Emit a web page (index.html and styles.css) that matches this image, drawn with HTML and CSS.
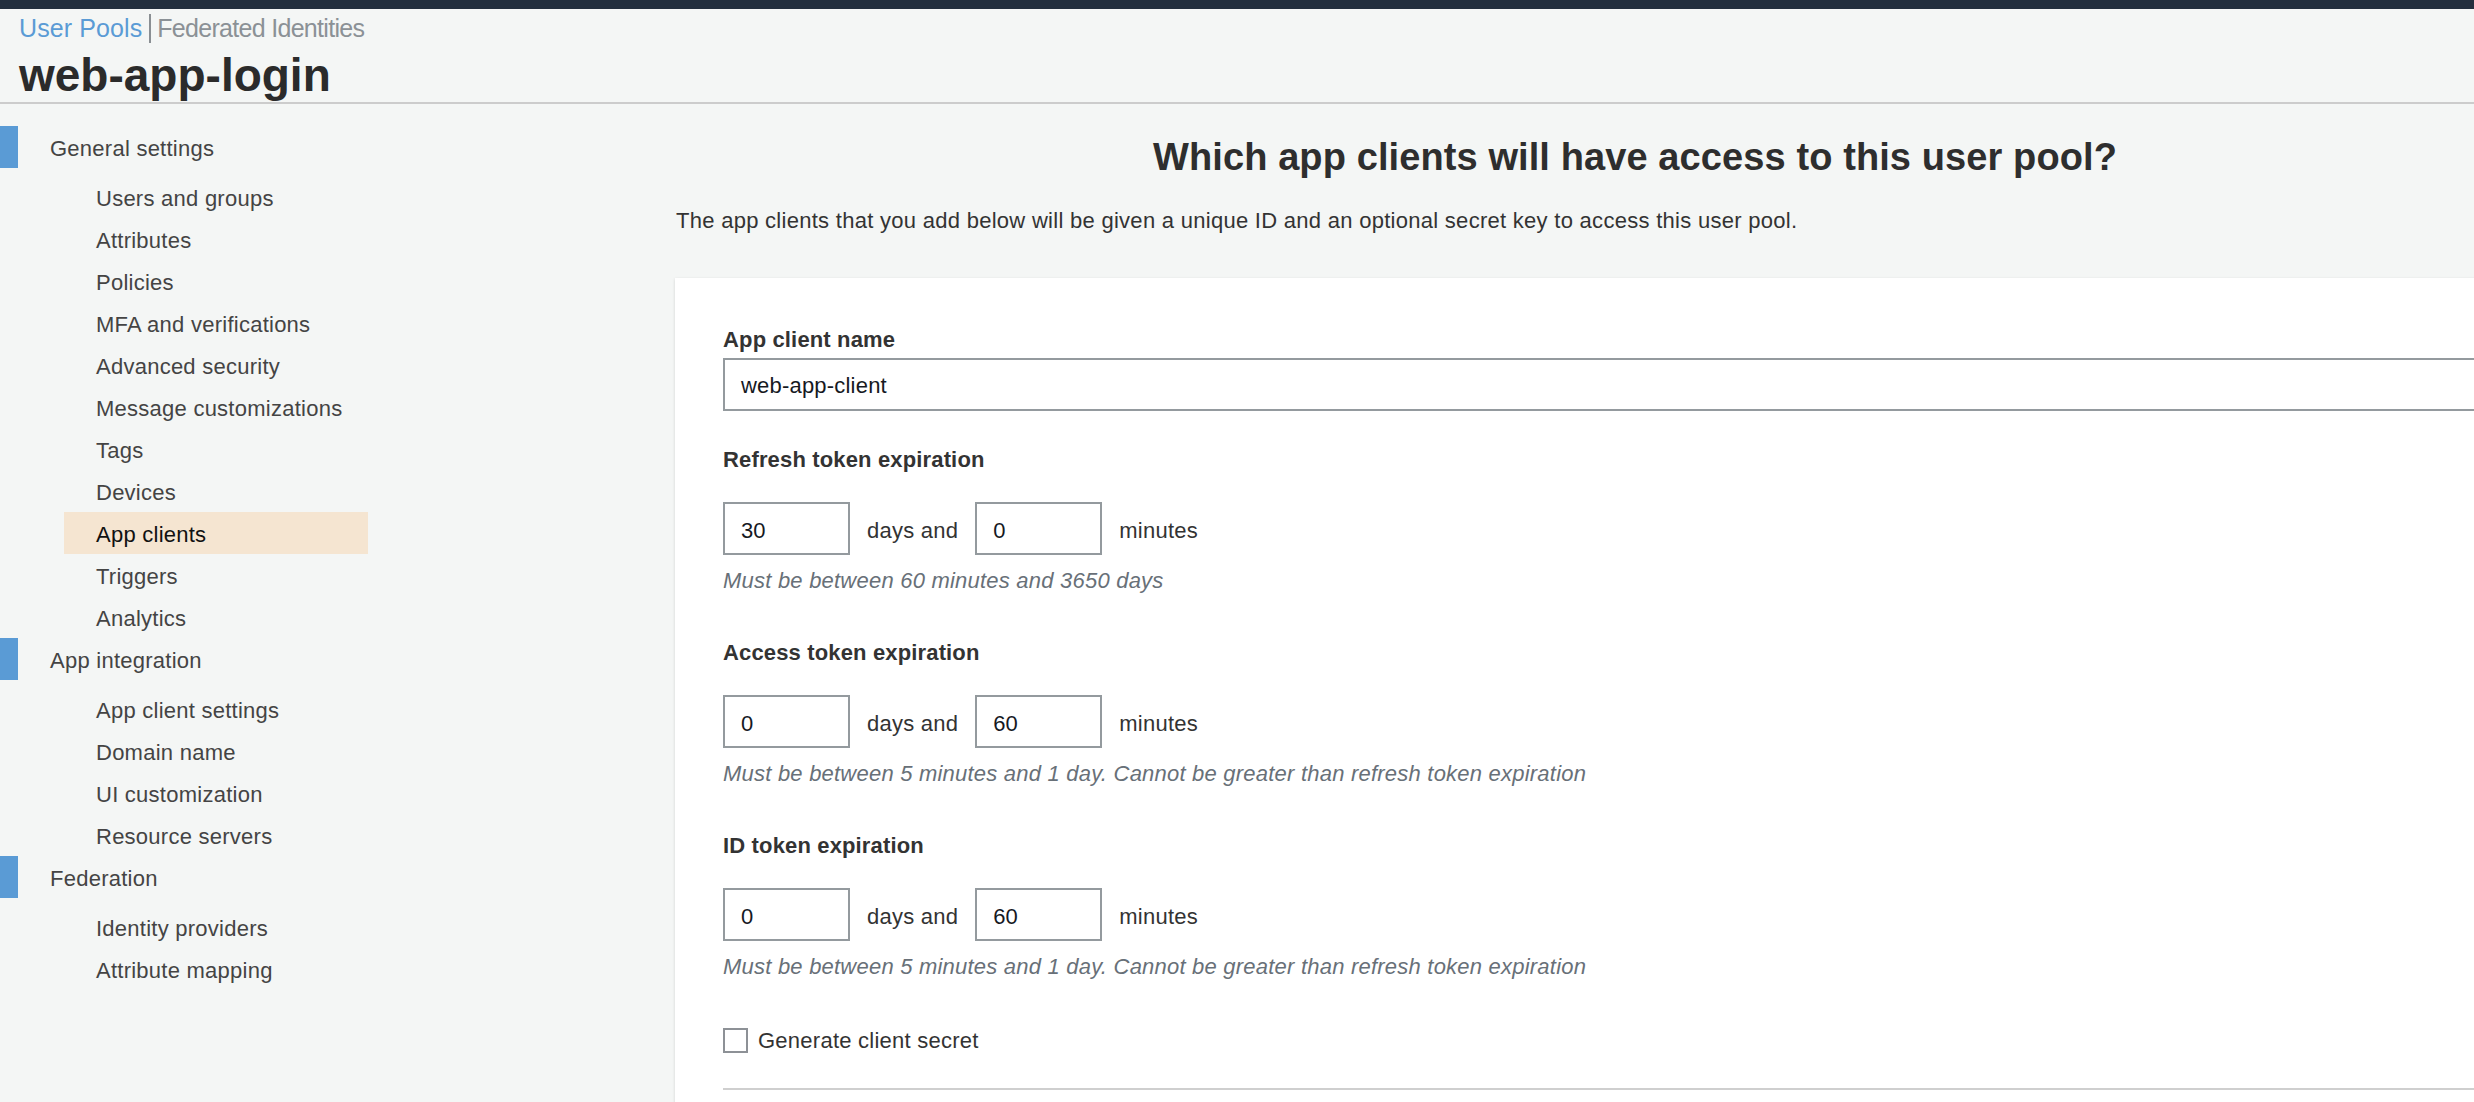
FILE: index.html
```html
<!DOCTYPE html>
<html lang="en">
<head>
<meta charset="utf-8">
<title>web-app-login - App clients</title>
<link rel="stylesheet" href="styles.css">
</head>
<body>
<div class="topbar"></div>
<header class="header">
  <nav class="crumbs">
    <a class="crumb-active">User Pools</a>
    <span class="crumb-sep"></span>
    <a class="crumb">Federated Identities</a>
  </nav>
  <h1 class="pool-title">web-app-login</h1>
</header>
<div class="layout">
  <aside class="sidebar">
    <div class="cat"><span class="cat-mark"></span><span class="cat-text">General settings</span></div>
    <ul class="subs">
      <li class="sub">Users and groups</li>
      <li class="sub">Attributes</li>
      <li class="sub">Policies</li>
      <li class="sub">MFA and verifications</li>
      <li class="sub">Advanced security</li>
      <li class="sub">Message customizations</li>
      <li class="sub">Tags</li>
      <li class="sub">Devices</li>
      <li class="sub sub-active">App clients</li>
      <li class="sub">Triggers</li>
      <li class="sub">Analytics</li>
    </ul>
    <div class="cat"><span class="cat-mark"></span><span class="cat-text">App integration</span></div>
    <ul class="subs">
      <li class="sub">App client settings</li>
      <li class="sub">Domain name</li>
      <li class="sub">UI customization</li>
      <li class="sub">Resource servers</li>
    </ul>
    <div class="cat"><span class="cat-mark"></span><span class="cat-text">Federation</span></div>
    <ul class="subs">
      <li class="sub">Identity providers</li>
      <li class="sub">Attribute mapping</li>
    </ul>
  </aside>
  <main class="main">
    <h2 class="page-heading">Which app clients will have access to this user pool?</h2>
    <p class="page-intro">The app clients that you add below will be given a unique ID and an optional secret key to access this user pool.</p>
    <section class="card">
      <div class="field-label">App client name</div>
      <div class="text-input">web-app-client</div>

      <div class="token-section first">
        <div class="field-label">Refresh token expiration</div>
        <div class="token-row">
          <div class="num-input">30</div>
          <span class="unit">days and</span>
          <div class="num-input">0</div>
          <span class="unit">minutes</span>
        </div>
        <div class="hint">Must be between 60 minutes and 3650 days</div>
      </div>

      <div class="token-section">
        <div class="field-label">Access token expiration</div>
        <div class="token-row">
          <div class="num-input">0</div>
          <span class="unit">days and</span>
          <div class="num-input">60</div>
          <span class="unit">minutes</span>
        </div>
        <div class="hint">Must be between 5 minutes and 1 day. Cannot be greater than refresh token expiration</div>
      </div>

      <div class="token-section">
        <div class="field-label">ID token expiration</div>
        <div class="token-row">
          <div class="num-input">0</div>
          <span class="unit">days and</span>
          <div class="num-input">60</div>
          <span class="unit">minutes</span>
        </div>
        <div class="hint">Must be between 5 minutes and 1 day. Cannot be greater than refresh token expiration</div>
      </div>

      <label class="check-row"><span class="checkbox"></span><span>Generate client secret</span></label>
      <div class="divider"></div>
    </section>
  </main>
</div>
</body>
</html>
```

FILE: styles.css
```css
html, body {
  margin: 0;
  padding: 0;
  overflow: hidden;
}
body {
  background: #f4f6f5;
  font-family: "Liberation Sans", Arial, Helvetica, sans-serif;
  color: #333;
  width: 2474px;
  height: 1102px;
}
.topbar {
  height: 9px;
  background: #232f3e;
}
.header {
  padding: 4px 19px 0 19px;
  border-bottom: 2px solid #cccccc;
}
.crumbs {
  display: flex;
  align-items: center;
  height: 30px;
  font-size: 25px;
  line-height: 30px;
}
.crumb-active {
  color: #5a9bd5;
  letter-spacing: 0.1px;
}
.crumb-sep {
  width: 2px;
  height: 29px;
  background: #8a8f93;
  margin: 0 6px 0 7px;
}
.crumb {
  color: #8b9196;
  letter-spacing: -0.7px;
}
.pool-title {
  margin: 7px 0 0 0;
  padding-bottom: 2px;
  font-size: 46px;
  line-height: 50px;
  font-weight: bold;
  color: #2b2b2b;
}
.layout {
  display: flex;
  align-items: flex-start;
}
.sidebar {
  width: 675px;
  flex-shrink: 0;
  padding-top: 22px;
}
.cat {
  display: flex;
  align-items: center;
  height: 42px;
  margin-bottom: 8px;
  font-size: 22px;
  letter-spacing: 0.25px;
  color: #444;
}
.cat-mark {
  width: 18px;
  height: 42px;
  background: #5a9bd5;
  margin-right: 32px;
}
.cat-text {
  padding-top: 3px;
}
.subs {
  list-style: none;
  margin: 0 0 0 64px;
  padding: 0;
  width: 304px;
}
.sub {
  height: 42px;
  line-height: 45px;
  padding-left: 32px;
  font-size: 22px;
  letter-spacing: 0.25px;
  color: #444;
}
.sub-active {
  background: #f5e5d1;
  color: #111;
}
.main {
  width: 1920px;
  flex-shrink: 0;
  padding-top: 30px;
}
.page-heading {
  margin: 0;
  text-align: center;
  font-size: 38px;
  line-height: 46px;
  font-weight: bold;
  letter-spacing: 0.1px;
  color: #2e2e2e;
}
.page-intro {
  margin: 24px 0 41px 1px;
  font-size: 22px;
  line-height: 33px;
  letter-spacing: 0.28px;
  color: #333;
}
.card {
  background: #ffffff;
  box-shadow: 0 1px 3px rgba(0, 0, 0, 0.14);
  padding: 45px 48px 40px 48px;
}
.field-label {
  font-size: 22px;
  line-height: 33px;
  font-weight: bold;
  letter-spacing: 0.15px;
  color: #333;
}
.text-input {
  margin-top: 2px;
  height: 49px;
  border: 2px solid #949a9e;
  padding-left: 16px;
  font-size: 22px;
  line-height: 51px;
  letter-spacing: 0.2px;
  color: #16191f;
  background: #fff;
}
.token-section {
  margin-top: 39px;
}
.token-section.first {
  margin-top: 32px;
}
.token-row {
  display: flex;
  align-items: center;
  margin-top: 26px;
  height: 53px;
}
.num-input {
  box-sizing: border-box;
  width: 127px;
  height: 53px;
  border: 2px solid #949a9e;
  padding-left: 16px;
  padding-top: 3px;
  font-size: 22px;
  line-height: 47px;
  color: #16191f;
}
.unit {
  margin: 0 17px;
  padding-top: 5px;
  font-size: 22px;
  letter-spacing: 0.25px;
  color: #333;
}
.hint {
  margin-top: 9px;
  font-size: 22px;
  line-height: 33px;
  font-style: italic;
  letter-spacing: 0.22px;
  color: #687078;
}
.check-row {
  display: flex;
  align-items: center;
  margin-top: 41px;
  height: 33px;
  font-size: 22px;
  letter-spacing: 0.25px;
  color: #333;
}
.checkbox {
  box-sizing: border-box;
  width: 25px;
  height: 25px;
  border: 2px solid #8d9196;
  background: #fff;
  margin-right: 10px;
}
.divider {
  margin-top: 31px;
  height: 2px;
  background: #cfcfcf;
}
```
